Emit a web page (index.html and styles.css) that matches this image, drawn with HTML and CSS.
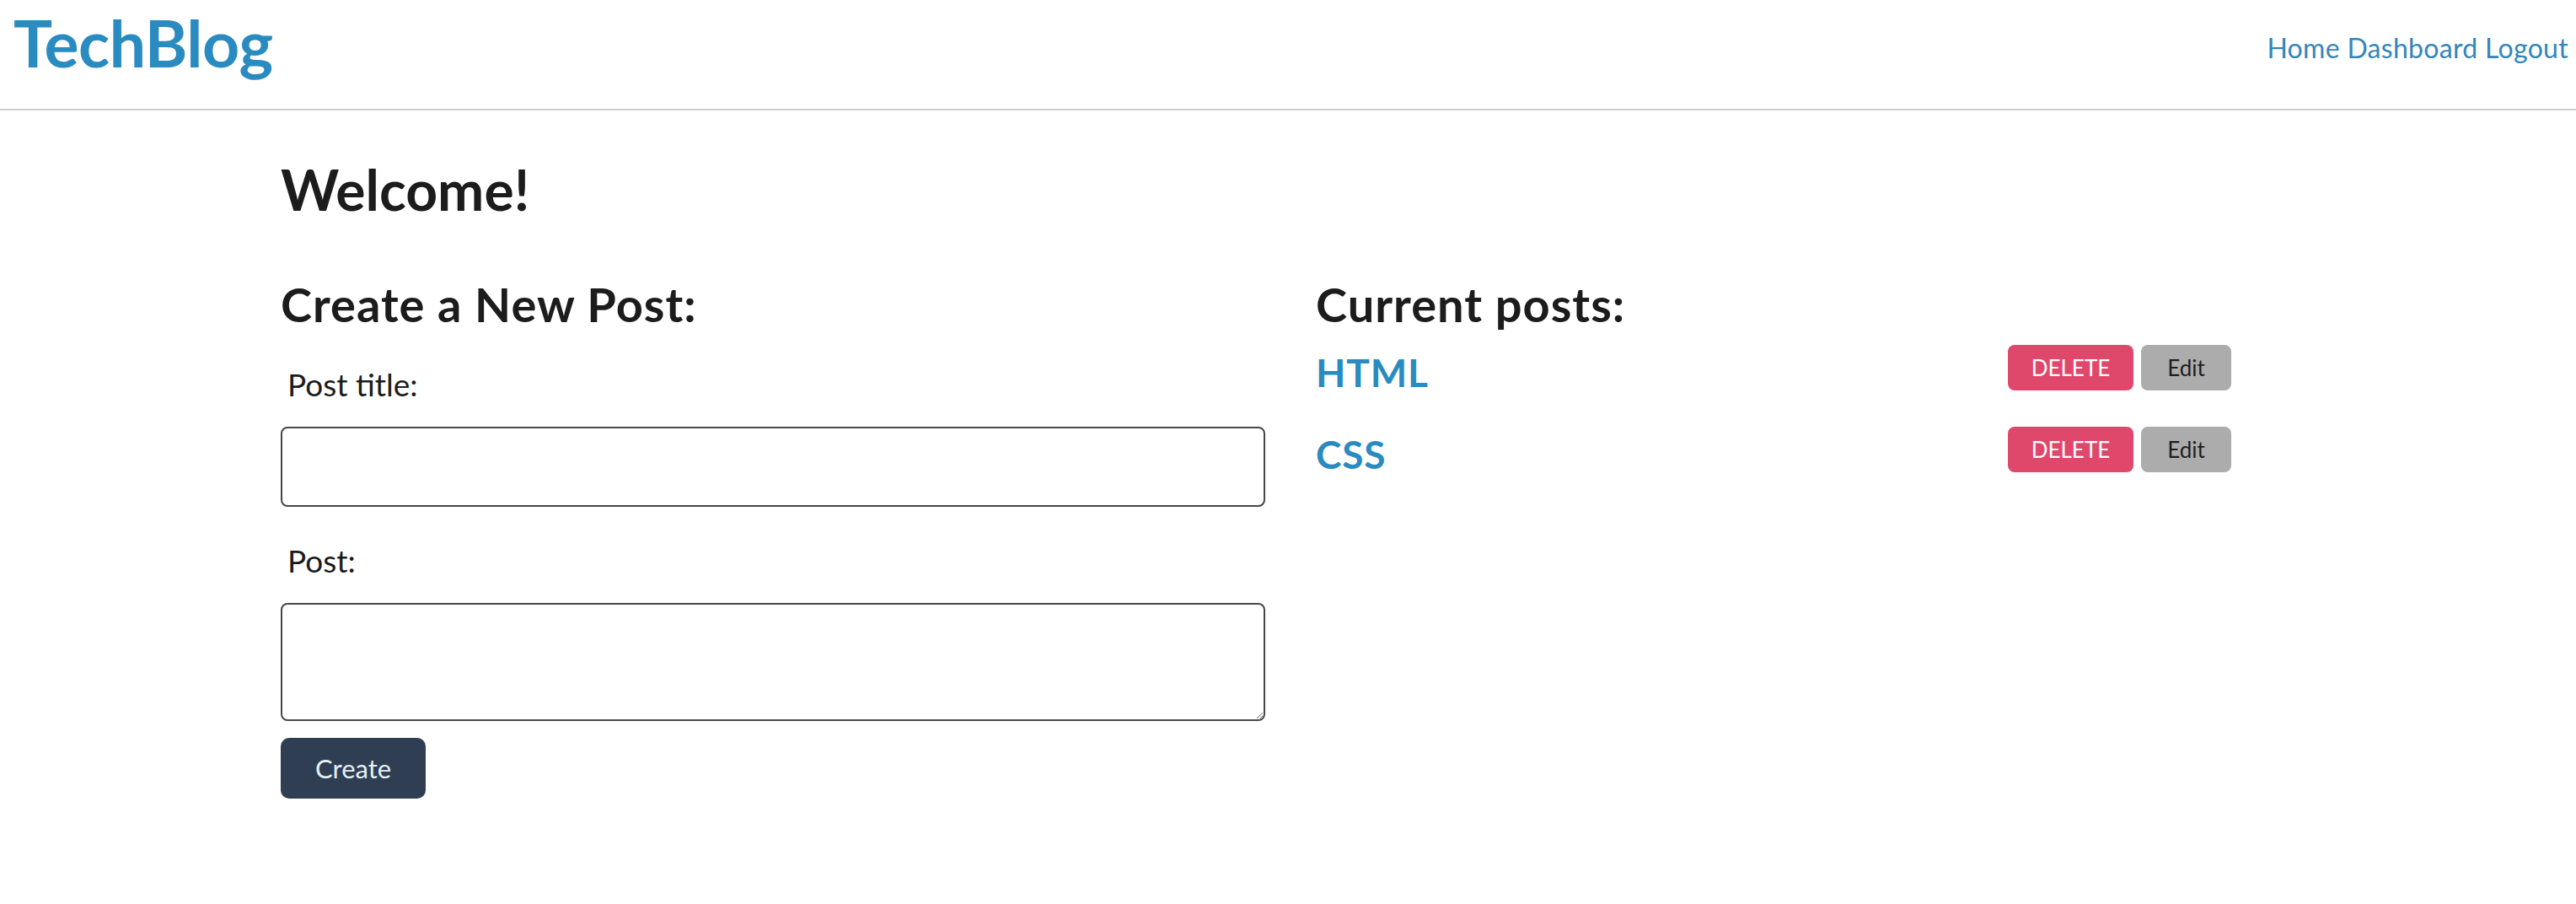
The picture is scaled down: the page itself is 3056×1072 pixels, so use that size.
FILE: index.html
```html
<!DOCTYPE html>
<html lang="en">
<head>
<meta charset="utf-8">
<title>TechBlog</title>
<link rel="stylesheet" href="styles.css">
</head>
<body>
<header class="nav">
  <a class="brand" href="#">TechBlog</a>
  <nav class="links"><a href="#">Home</a> <a href="#">Dashboard</a> <a href="#">Logout</a></nav>
</header>
<main class="main">
  <h1 class="welcome">Welcome!</h1>
  <div class="columns">
    <section class="create">
      <h2 class="heading">Create a New Post:</h2>
      <form class="post-form">
        <label class="field-label" for="title">Post title:</label>
        <input class="field-input" id="title" type="text">
        <label class="field-label post-label" for="body">Post:</label>
        <textarea class="field-area" id="body"></textarea>
        <button class="create-btn" type="button">Create</button>
      </form>
    </section>
    <section class="posts">
      <h2 class="heading">Current posts:</h2>
      <ul class="post-list">
        <li class="post-row">
          <a class="post-title" href="#">HTML</a>
          <div class="actions">
            <button class="btn btn-delete" type="button">DELETE</button>
            <button class="btn btn-edit" type="button">Edit</button>
          </div>
        </li>
        <li class="post-row">
          <a class="post-title" href="#">CSS</a>
          <div class="actions">
            <button class="btn btn-delete" type="button">DELETE</button>
            <button class="btn btn-edit" type="button">Edit</button>
          </div>
        </li>
      </ul>
    </section>
  </div>
</main>
</body>
</html>
```
FILE: styles.css
```css
* { box-sizing: border-box; }

body {
  margin: 0;
  font-family: Lato, "Open Sans", sans-serif;
  color: #1c1c1c;
  background: #ffffff;
}

.nav {
  display: flex;
  justify-content: space-between;
  align-items: flex-start;
  height: 131px;
  border-bottom: 2px solid #cccccc;
  padding: 0 9px 0 16px;
}

.brand {
  font-size: 77px;
  line-height: 92px;
  font-weight: 700;
  letter-spacing: -0.5px;
  margin-top: 4px;
  color: #2a8bc0;
  text-decoration: none;
}

.links {
  font-size: 32px;
  line-height: 38px;
  letter-spacing: 0.3px;
  margin-top: 38px;
}

.links a {
  color: #3486b9;
  text-decoration: none;
}

.main {
  padding-left: 333px;
}

.welcome {
  font-size: 66px;
  line-height: 79px;
  font-weight: 700;
  margin: 54px 0 0;
}

.columns {
  display: flex;
  gap: 60px;
  margin-top: 63px;
}

.heading {
  font-size: 56px;
  line-height: 67px;
  font-weight: 700;
  letter-spacing: 1px;
  margin: 0;
}

.create {
  width: 1168px;
}

.post-form {
  display: flex;
  flex-direction: column;
  align-items: flex-start;
  margin-top: 40px;
}

.field-label {
  font-size: 37px;
  line-height: 44px;
  padding-left: 8px;
}

.post-label {
  margin-top: 42px;
}

.field-input,
.field-area {
  display: block;
  width: 100%;
  margin: 28px 0 0;
  border: 2px solid #474747;
  border-radius: 8px;
  background: #ffffff;
  font-family: inherit;
  font-size: 31px;
}

.field-input {
  height: 95px;
}

.field-area {
  height: 140px;
}

.create-btn {
  margin-top: 20px;
  width: 172px;
  height: 72px;
  border: none;
  border-radius: 10px;
  background: #2f3e52;
  color: #e4f0f5;
  font-family: inherit;
  font-size: 31px;
}

.posts {
  width: 1086px;
}

.post-list {
  list-style: none;
  margin: 15px 0 0;
  padding: 0;
  display: flex;
  flex-direction: column;
  gap: 37px;
}

.post-row {
  display: flex;
  justify-content: space-between;
  align-items: flex-start;
}

.post-title {
  font-size: 46px;
  line-height: 55px;
  font-weight: 700;
  letter-spacing: 0.8px;
  margin-top: 5px;
  color: #2a8bc0;
  text-decoration: none;
}

.actions {
  display: flex;
  gap: 9px;
}

.btn {
  height: 54px;
  border: none;
  border-radius: 8px;
  font-family: inherit;
  font-size: 26px;
  padding: 0;
}

.btn-delete {
  width: 149px;
  background: #e0486b;
  color: #ffffff;
}

.btn-edit {
  width: 107px;
  background: #acacac;
  color: #1e1e1e;
}
```
